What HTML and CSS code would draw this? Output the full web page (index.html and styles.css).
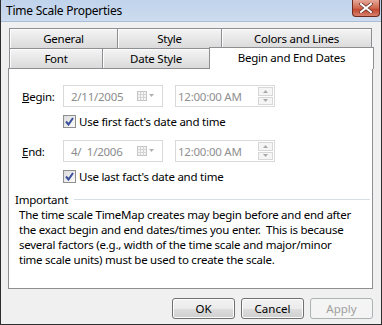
FILE: index.html
```html
<!DOCTYPE html>
<html>
	<head>
		<link rel="stylesheet" href="styles.css">
	</head>
	<body>
		<div class="window">
			<div class="titlebar">
				<span class="title">Time Scale Properties</span>
				<span class="close">
					<svg width="14" height="10" viewBox="0 0 14 10">
						<path d="M2 1 L12 9 M12 1 L2 9" stroke="#5a2a22" stroke-width="3.4" stroke-linecap="square"/>
						<path d="M2 1 L12 9 M12 1 L2 9" stroke="#fff" stroke-width="2" stroke-linecap="square"/>
					</svg>
				</span>
			</div>
			<div class="tabs">
				<div class="tabrow">
					<div class="tab tab-general">General</div>
					<div class="tab tab-style">Style</div>
					<div class="tab tab-colors">Colors and Lines</div>
				</div>
				<div class="tabrow">
					<div class="tab tab-font">Font</div>
					<div class="tab tab-datestyle">Date Style</div>
					<div class="tab tab-dates active">Begin and End Dates</div>
				</div>
			</div>
			<div class="panel">
				<div class="daterow">
					<label class="rowlabel"><u>B</u>egin:</label>
					<div class="field datefield">
						<span>2/11/2005</span>
						<svg class="cal" width="18" height="10" viewBox="0 0 18 10">
							<rect x="0.5" y="0.5" width="9" height="9" fill="#f4f4f4" stroke="#c4c4c4"/>
							<path d="M0.5 3.5 H9.5 M0.5 6.5 H9.5 M3.5 0.5 V9.5 M6.5 0.5 V9.5" stroke="#d4d4d4"/>
							<path d="M12 3 H17 L14.5 6 Z" fill="#b0b0b0"/>
						</svg>
					</div>
					<div class="field timefield">
						<span>12:00:00 AM</span>
						<div class="spin">
							<div class="spinbtn"><svg width="5" height="3" viewBox="0 0 5 3"><path d="M0 3 L2.5 0 L5 3 Z" fill="#a8a8a8"/></svg></div>
							<div class="spinbtn"><svg width="5" height="3" viewBox="0 0 5 3"><path d="M0 0 L5 0 L2.5 3 Z" fill="#a8a8a8"/></svg></div>
						</div>
					</div>
				</div>
				<div class="checkrow">
					<span class="checkbox">
						<svg width="9" height="9" viewBox="0 0 9 9"><path d="M1 4.5 L3.5 7.5 L8 1" fill="none" stroke="#3a4f9c" stroke-width="2"/></svg>
					</span>
					Use first fact's date and time
				</div>
				<div class="daterow second">
					<label class="rowlabel"><u>E</u>nd:</label>
					<div class="field datefield">
						<span>4/&nbsp; 1/2006</span>
						<svg class="cal" width="18" height="10" viewBox="0 0 18 10">
							<rect x="0.5" y="0.5" width="9" height="9" fill="#f4f4f4" stroke="#c4c4c4"/>
							<path d="M0.5 3.5 H9.5 M0.5 6.5 H9.5 M3.5 0.5 V9.5 M6.5 0.5 V9.5" stroke="#d4d4d4"/>
							<path d="M12 3 H17 L14.5 6 Z" fill="#b0b0b0"/>
						</svg>
					</div>
					<div class="field timefield">
						<span>12:00:00 AM</span>
						<div class="spin">
							<div class="spinbtn"><svg width="5" height="3" viewBox="0 0 5 3"><path d="M0 3 L2.5 0 L5 3 Z" fill="#a8a8a8"/></svg></div>
							<div class="spinbtn"><svg width="5" height="3" viewBox="0 0 5 3"><path d="M0 0 L5 0 L2.5 3 Z" fill="#a8a8a8"/></svg></div>
						</div>
					</div>
				</div>
				<div class="checkrow">
					<span class="checkbox">
						<svg width="9" height="9" viewBox="0 0 9 9"><path d="M1 4.5 L3.5 7.5 L8 1" fill="none" stroke="#3a4f9c" stroke-width="2"/></svg>
					</span>
					Use last fact's date and time
				</div>
				<div class="group">
					<div class="grouphead"><span>Important</span><span class="rule"></span></div>
					<p class="note">The time scale TimeMap creates may begin before and end after<br>the exact begin and end dates/times you enter.&nbsp; This is because<br>several factors (e.g., width of the time scale and major/minor<br>time scale units) must be used to create the scale.</p>
				</div>
			</div>
			<div class="buttons">
				<button class="btn">OK</button>
				<button class="btn">Cancel</button>
				<button class="btn" disabled>Apply</button>
			</div>
		</div>
	</body>
</html>
```

FILE: styles.css
```css
body {
	margin: 0;
	font-family: "Noto Sans", sans-serif;
	font-size: 11.5px;
	letter-spacing: -0.25px;
	color: #000;
}
.window {
	width: 382px;
	height: 325px;
	box-sizing: border-box;
	border: 1px solid #2e2e2e;
	border-top: none;
	background: #f0f0f0;
	display: flex;
	flex-direction: column;
}
.titlebar {
	height: 22px;
	flex: none;
	display: flex;
	align-items: flex-start;
	background: linear-gradient(#bfd3eb, #cddcef);
	border-bottom: 1px solid #a9bdd6;
	box-sizing: border-box;
}
.title {
	margin: 3px 0 0 5px;
	line-height: 16px;
	font-size: 12px;
}
.close {
	margin-left: auto;
	margin-right: 1px;
	width: 28px;
	height: 17px;
	box-sizing: border-box;
	border: 1px solid #6f2b20;
	border-top: none;
	border-radius: 0 0 4px 4px;
	background: linear-gradient(#e6a89a, #d0684f 50%, #c24a32 60%, #d8806c);
	display: flex;
	align-items: center;
	justify-content: center;
}

.tabs {
	flex: none;
	padding: 6px 0 0 8px;
}
.tabrow {
	display: flex;
	height: 20px;
}
.tab {
	box-sizing: border-box;
	height: 20px;
	border: 1px solid #8d8f93;
	border-bottom: none;
	margin-right: -1px;
	background: linear-gradient(#f4f4f4, #e6e6e6 55%, #dadada);
	box-shadow: inset 1px 1px 0 #fcfcfc;
	text-align: center;
	line-height: 19px;
}
.tab-general { width: 109px; }
.tab-style { width: 105px; }
.tab-colors { width: 151px; }
.tab-font { width: 94px; }
.tab-datestyle { width: 108px; }
.tab-dates {
	width: 165px;
	position: relative;
	z-index: 1;
	height: 22px;
	margin-top: -1px;
	background: #fff;
	box-shadow: none;
	line-height: 20px;
}

.panel {
	flex: none;
	margin: 0 8px 0 7px;
	height: 221px;
	box-sizing: border-box;
	border: 1px solid #8d8f93;
	background: #fff;
	padding: 16px 0 0 13px;
	overflow: hidden;
}
.daterow {
	display: flex;
	align-items: center;
	height: 22px;
}
.daterow.second {
	margin-top: 12px;
}
.rowlabel {
	width: 41px;
}
.field {
	box-sizing: border-box;
	width: 100px;
	height: 22px;
	border: 1px solid #d9d9d9;
	display: flex;
	align-items: center;
	color: #8c8c8c;
}
.datefield {
	padding-left: 7px;
	margin-right: 12px;
}
.datefield .cal {
	margin-left: auto;
	margin-right: 7px;
}
.timefield {
	padding-left: 2px;
	color: #909090;
}
.spin {
	margin-left: auto;
	margin-right: 1px;
	width: 15px;
	height: 18px;
	display: flex;
	flex-direction: column;
	gap: 1px;
}
.spinbtn {
	flex: 1;
	border: 1px solid #d7d7d7;
	background: #f5f5f5;
	display: flex;
	align-items: center;
	justify-content: center;
}

.checkrow {
	display: flex;
	align-items: center;
	height: 13px;
	margin: 8px 0 0 41px;
}
.checkbox {
	width: 13px;
	height: 13px;
	box-sizing: border-box;
	border: 1px solid #8e8f8f;
	background: linear-gradient(135deg, #dcdcdc, #fbfbfb);
	display: flex;
	align-items: center;
	justify-content: center;
	margin-right: 3px;
}

.group {
	margin: 8px 0 0 -7px;
}
.grouphead {
	display: flex;
	align-items: center;
	height: 16px;
}
.rule {
	flex: 1;
	height: 1px;
	background: #d5dfe5;
	margin: 1px 2px 0 6px;
}
.note {
	margin: 0 0 0 4px;
	line-height: 15px;
	white-space: nowrap;
}

.buttons {
	flex: none;
	display: flex;
	justify-content: flex-end;
	gap: 6px;
	padding: 9px 8px 0 0;
}
.btn {
	width: 63px;
	height: 21px;
	box-sizing: border-box;
	border: 1px solid #707070;
	border-radius: 3px;
	background: linear-gradient(#f2f2f2, #ebebeb 50%, #dddddd 51%, #cfcfcf);
	box-shadow: inset 0 0 0 1px #fcfcfc;
	font: inherit;
	color: #000;
	padding: 0;
}
.btn:disabled {
	border-color: #adb2b5;
	background: #f4f4f4;
	box-shadow: none;
	color: #a0a0a0;
}
```
